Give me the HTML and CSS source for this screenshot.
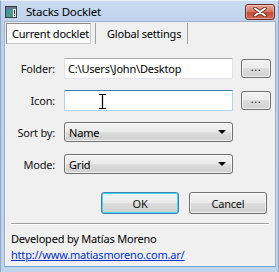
FILE: index.html
```html
<!DOCTYPE html>
<html>
<head>
<meta charset="utf-8">
<link rel="stylesheet" href="styles.css">
</head>
<body>
<div class="window">
  <div class="titlebar">
    <svg class="appicon" width="12" height="12" viewBox="0 0 12 12">
      <defs>
        <linearGradient id="ig" x1="0" y1="0" x2="1" y2="1">
          <stop offset="0" stop-color="#3f8fb8"/>
          <stop offset="1" stop-color="#4fa070"/>
        </linearGradient>
      </defs>
      <rect x="0.5" y="0.5" width="11" height="11" fill="#e8ecef" stroke="#3a3f46"/>
      <rect x="1" y="3" width="7" height="8" fill="url(#ig)"/>
      <rect x="1" y="1" width="10" height="2" fill="#6a7a8a"/>
      <rect x="9" y="4" width="1" height="4" fill="#2a2a2a"/>
      <rect x="9" y="9" width="1" height="1" fill="#2a2a2a"/>
    </svg>
    <span class="title">Stacks Docklet</span>
    <div class="close">
      <svg width="14" height="10" viewBox="0 0 14 10">
        <path d="M2 1.5 L12 8.5 M12 1.5 L2 8.5" stroke="#6b2a22" stroke-width="3.6" stroke-linecap="round"/>
        <path d="M2 1.5 L12 8.5 M12 1.5 L2 8.5" stroke="#ffffff" stroke-width="2" stroke-linecap="round"/>
      </svg>
    </div>
  </div>
  <div class="client">
    <div class="tabs">
      <div class="tab active"><span class="tabface">Current docklet</span></div>
      <div class="tab second"><span class="tabface">Global settings</span></div>
    </div>
    <div class="panel">
      <div class="form">
        <label class="lbl">Folder:</label>
        <div class="textbox">C:\Users\John\Desktop</div>
        <div class="btn small">...</div>

        <label class="lbl">Icon:</label>
        <div class="textbox hot">
          <svg class="ibeam" width="9" height="15" viewBox="0 0 9 15">
            <path d="M1 0.5 H8 M4.5 0.5 V14.5 M1 14.5 H8" stroke="#000" stroke-width="1.2" fill="none"/>
          </svg>
        </div>
        <div class="btn small">...</div>

        <label class="lbl">Sort by:</label>
        <div class="combo"><span>Name</span><span class="arrow"></span></div>
        <div></div>

        <label class="lbl">Mode:</label>
        <div class="combo"><span>Grid</span><span class="arrow"></span></div>
        <div></div>
      </div>
      <div class="actions">
        <div class="btn default">OK</div>
        <div class="btn">Cancel</div>
      </div>
    </div>
    <div class="sep"></div>
    <div class="footer">
      <div>Developed by Matías Moreno</div>
      <a class="link" href="#">http://www.matiasmoreno.com.ar/</a>
    </div>
  </div>
</div>
</body>
</html>
```
FILE: styles.css
```css
* { box-sizing: border-box; }
body {
  margin: 0;
  font-family: "Noto Sans", "DejaVu Sans", sans-serif;
  font-size: 11px;
  letter-spacing: -0.2px;
  color: #000;
  background: #ffffff;
}
.window {
  width: 279px;
  height: 272px;
  display: flex;
  flex-direction: column;
  background: linear-gradient(#c9dbf0, #b9cfea 30px, #bfd3eb);
  border-left: 1px solid #8ea7c4;
  border-right: 1px solid #8ea7c4;
  border-top: 1px solid #e6eef8;
}
.titlebar {
  height: 20px;
  display: flex;
  align-items: center;
  padding-left: 4px;
  position: relative;
}
.appicon { margin-right: 9px; margin-top: 1px; }
.title { font-size: 11.5px; color: #000; margin-top: 1px; }
.close {
  position: absolute;
  right: 3px;
  top: 3px;
  width: 30px;
  height: 16px;
  border: 1px solid #6e2b23;
  border-radius: 3px;
  background: linear-gradient(#e9a898, #d77a68 45%, #c44b3a 55%, #cf6a56);
  display: flex;
  align-items: center;
  justify-content: center;
  box-shadow: inset 0 0 0 1px rgba(255,255,255,0.35);
}
.client {
  flex: 1;
  margin: 0 2px 5px 3px;
  background: #f0f0f0;
  border: 1px solid #9fb2c8;
  border-bottom: 1px solid #6fa4d8;
  display: flex;
  flex-direction: column;
}
.tabs {
  display: flex;
  height: 22px;
  padding-top: 1px;
}
.tab {
  display: flex;
  align-items: stretch;
  border-right: 1px solid #a0a0a0;
}
.tab.active { padding: 0 4px 0 1px; }
.tab.second { width: 92px; padding-left: 11px; }
.tabface {
  display: flex;
  align-items: center;
  color: #000;
  white-space: nowrap;
}
.tab.active .tabface {
  width: 85px;
  border: 1px solid #8a8a8a;
  border-right-color: #c8c8c8;
  border-bottom-color: #c8c8c8;
  background: #fafafa;
  padding: 0 0 0 5px;
}
.panel {
  padding: 8px 8px 0 0;
}
.form {
  display: grid;
  grid-template-columns: 50px 169px 30px;
  grid-auto-rows: 32px;
  column-gap: 9px;
  align-items: center;
}
.form > :nth-child(3n) { margin-left: -1px; }
.lbl { text-align: right; color: #111; }
.textbox {
  height: 21px;
  background: #fff;
  border: 1px solid #e2e3ea;
  border-top-color: #abadb3;
  border-radius: 1px;
  padding: 2px 3px;
  line-height: 15px;
  white-space: nowrap;
  overflow: hidden;
  position: relative;
}
.textbox.hot {
  border-color: #b5d3ee;
  border-top-color: #3c7fb1;
}
.ibeam { position: absolute; left: 33px; top: 3px; }
.btn {
  display: flex;
  align-items: center;
  justify-content: center;
  border: 1px solid #707070;
  border-radius: 3px;
  background: linear-gradient(#f3f3f3, #ebebeb 50%, #dddddd 50%, #cfcfcf);
  box-shadow: inset 0 0 0 1px rgba(255,255,255,0.7);
  color: #111;
}
.btn.small { height: 19px; width: 30px; padding-bottom: 3px; letter-spacing: 0.5px; }
.combo {
  height: 20px;
  display: flex;
  align-items: center;
  justify-content: space-between;
  border: 1px solid #707070;
  border-radius: 3px;
  background: linear-gradient(#f3f3f3, #ebebeb 50%, #dddddd 50%, #cfcfcf);
  box-shadow: inset 0 0 0 1px rgba(255,255,255,0.7);
  padding: 0 6px 0 4px;
}
.arrow {
  width: 0;
  height: 0;
  border-left: 4px solid transparent;
  border-right: 4px solid transparent;
  border-top: 4px solid #000;
}
.actions {
  display: flex;
  justify-content: flex-end;
  gap: 10px;
  margin-top: 12px;
}
.actions .btn { width: 78px; height: 22px; }
.btn.default {
  border-color: #3c7fb1;
  box-shadow: inset 0 0 0 1px #48d8fb;
}
.sep {
  margin: 9px 6px 0 6px;
  border-top: 1px solid #a0a0a0;
  border-bottom: 1px solid #ffffff;
}
.footer {
  padding: 6px 6px 0 6px;
  line-height: 16px;
}
.link { color: #0033cc; text-decoration: underline; }
```
